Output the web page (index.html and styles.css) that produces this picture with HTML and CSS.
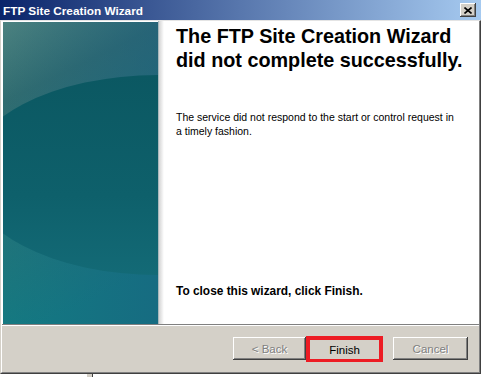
FILE: index.html
```html
<!DOCTYPE html>
<html>
<head>
<meta charset="utf-8">
<title>FTP Site Creation Wizard</title>
<link rel="stylesheet" href="styles.css">
</head>
<body>
<div class="window">
  <div class="titlebar">
    <span class="title">FTP Site Creation Wizard</span>
    <span class="close-btn"><svg width="8" height="7" viewBox="0 0 8 7"><path d="M0.5 0.5 L7.5 6.5 M7.5 0.5 L0.5 6.5" stroke="#000" stroke-width="1.6" fill="none"/></svg></span>
  </div>
  <div class="frame">
    <div class="inner">
      <div class="main">
        <div class="banner">
          <svg width="155" height="302" viewBox="0 0 155 302">
            <defs>
              <linearGradient id="bg" x1="0" y1="0" x2="0.25" y2="1">
                <stop offset="0" stop-color="#4c8280"/>
                <stop offset="0.25" stop-color="#306c70"/>
                <stop offset="1" stop-color="#137a82"/>
              </linearGradient>
              <linearGradient id="tint" x1="0" y1="0" x2="1" y2="0">
                <stop offset="0" stop-color="#1a5a80" stop-opacity="0"/>
                <stop offset="1" stop-color="#1a5a80" stop-opacity="0.45"/>
              </linearGradient>
              <linearGradient id="el" x1="0" y1="0" x2="0" y2="1">
                <stop offset="0" stop-color="#0b5862"/>
                <stop offset="0.6" stop-color="#0e606b"/>
                <stop offset="1" stop-color="#136a76"/>
              </linearGradient>
            </defs>
            <rect width="155" height="302" fill="url(#bg)"/>
            <rect width="155" height="302" fill="url(#tint)"/>
            <ellipse cx="155" cy="153" rx="191" ry="100" fill="url(#el)"/>
          </svg>
        </div>
        <div class="shadow"></div>
        <div class="content">
          <h1 class="heading">The FTP Site Creation Wizard<br>did not complete successfully.</h1>
          <p class="msg">The service did not respond to the start or control request in<br>a timely fashion.</p>
          <p class="hint">To close this wizard, click Finish.</p>
        </div>
      </div>
      <div class="footer">
        <button class="btn disabled">&lt; Back</button>
        <div class="highlight"><button class="btn finish">Finish</button></div>
        <button class="btn disabled cancel">Cancel</button>
      </div>
    </div>
  </div>
  <div class="desktop"><span class="stub"></span></div>
</div>
</body>
</html>
```
FILE: styles.css
```css
html, body {
  margin: 0;
  padding: 0;
  background: #fff;
}
body {
  font-family: "Liberation Sans", Arial, sans-serif;
  color: #000;
}
.window {
  width: 481px;
}
.titlebar {
  height: 20px;
  box-sizing: border-box;
  padding: 1px 5px 0 3px;
  display: flex;
  align-items: center;
  justify-content: space-between;
  background: linear-gradient(to right, #0a246a, #a6caf0);
}
.title {
  color: #fff;
  font-weight: bold;
  font-size: 11.8px;
  line-height: 14px;
}
.close-btn {
  width: 16px;
  height: 14px;
  box-sizing: border-box;
  display: flex;
  align-items: center;
  justify-content: center;
  background: #d4d0c8;
  box-shadow: inset -1px -1px #404040, inset 1px 1px #fff, inset -2px -2px #808080;
  margin-top: -1px;
}
.frame {
  border-top: 1px solid #e4e4e4;
  border-left: 1px solid #d4d0c8;
  border-right: 1px solid #404040;
  border-bottom: 1px solid #404040;
}
.inner {
  border-left: 1px solid #fff;
  border-right: 1px solid #808080;
  border-bottom: 1px solid #808080;
}
.main {
  display: flex;
  height: 303px;
  background: #fff;
}
.banner {
  margin: 1px 0 0 1px;
  width: 155px;
  height: 302px;
}
.banner svg {
  display: block;
}
.shadow {
  width: 6px;
  background: linear-gradient(to right, #aab8bc 0, #aab8bc 1px, #d4d4d4 1px, #fff 6px);
}
.content {
  flex: 1;
  display: flex;
  flex-direction: column;
  padding: 3px 0 0 12px;
}
.heading {
  margin: 0;
  font-size: 19.8px;
  line-height: 24px;
  font-weight: bold;
}
.msg {
  margin: 39px 0 0;
  font-size: 10.5px;
  line-height: 13.5px;
}
.hint {
  margin: auto 0 26px;
  font-size: 11.9px;
  line-height: 14px;
  font-weight: bold;
}
.footer {
  height: 47px;
  background: #d4d0c8;
  border-top: 1px solid #808080;
  box-shadow: inset 0 1px #fff;
  display: flex;
  align-items: center;
  justify-content: flex-end;
  padding: 0 11px 0 0;
}
.btn {
  font-family: "Liberation Sans", Arial, sans-serif;
  font-size: 11.5px;
  height: 23px;
  width: 73px;
  padding: 0;
  border: none;
  background: #d4d0c8;
  box-shadow: inset -1px -1px #404040, inset 1px 1px #fff, inset -2px -2px #808080;
  color: #000;
}
.disabled {
  color: #808080;
  text-shadow: 1px 1px 0 #fff;
}
.highlight {
  border: 4px solid #ed1c24;
  width: 69px;
  height: 18px;
}
.finish {
  width: 69px;
  height: 18px;
  box-shadow: none;
}
.cancel {
  width: 75px;
  margin-left: 10px;
}
.desktop {
  height: 3px;
  display: flex;
}
.stub {
  margin-left: 87px;
  width: 5px;
  height: 3px;
  background: #d4d0c8;
  border-right: 1px solid #404040;
}
```
